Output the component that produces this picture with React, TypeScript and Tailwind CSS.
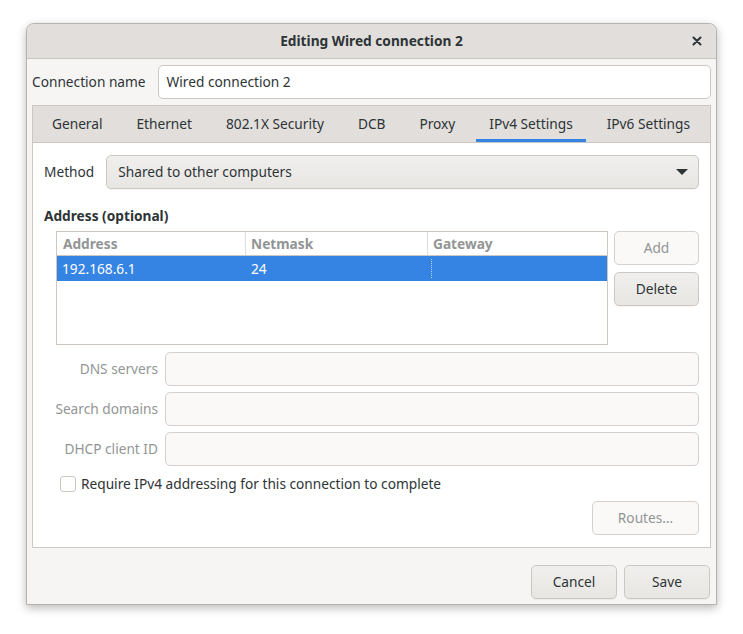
import React from "react";

const tabs = ["General", "Ethernet", "802.1X Security", "DCB", "Proxy", "IPv4 Settings", "IPv6 Settings"];

const btnBase =
  "flex items-center h-[34px] rounded-[5px] border border-[#cdc7c2] bg-gradient-to-b from-[#f0efed] to-[#e8e6e3] shadow-[0_1px_0_rgba(0,0,0,0.04)] text-[#2e3436]";
const btn = btnBase + " justify-center";
const btnDisabled =
  "flex items-center justify-center h-[34px] rounded-[5px] border border-[#d5d0cc] bg-[#faf9f8] text-[#929595]";

const DisabledRow = ({ label }: { label: string }) => (
  <div className="flex items-center gap-[7px]">
    <div className="w-[103px] text-right text-[#929595] whitespace-nowrap">{label}</div>
    <div className="flex-1 h-[34px] rounded-[5px] border border-[#d5d0cc] bg-[#faf9f8]" />
  </div>
);

export default function App() {
  return (
    <div
      className="w-[743px] h-[634px] bg-white pt-[23px] pl-[26px] text-[13.7px] leading-[22px] text-[#2e3436]"
      style={{ fontFamily: '"Noto Sans", "Open Sans", sans-serif' }}
    >
      <div className="w-[691px] h-[582px] flex flex-col bg-[#f6f5f4] rounded-t-[8px] border border-[#b6b2ad] shadow-[0_3px_10px_rgba(0,0,0,0.28)]">
        {/* title bar */}
        <div className="relative h-[35px] shrink-0 flex items-center justify-center bg-[#e1dedb] border-b border-[#c8c4bf] rounded-t-[8px]">
          <span className="font-bold">Editing Wired connection 2</span>
          <svg className="absolute right-[14px] top-[12px]" width="10" height="10" viewBox="0 0 10 10">
            <path d="M1.5 1.5 L8.5 8.5 M8.5 1.5 L1.5 8.5" stroke="#2e3436" strokeWidth="2" strokeLinecap="round" />
          </svg>
        </div>

        <div className="flex-1 flex flex-col px-[5px] pt-[6px]">
          {/* connection name */}
          <div className="flex items-center gap-[12px]">
            <span className="whitespace-nowrap">Connection name</span>
            <div className="flex-1 h-[34px] flex items-center px-[8px] rounded-[5px] border border-[#cdc7c2] bg-white">
              Wired connection 2
            </div>
          </div>

          {/* notebook */}
          <div className="mt-[6px] h-[443px] flex flex-col border border-[#cdc7c2] bg-white">
            <div className="h-[37px] shrink-0 flex items-stretch gap-[8px] pl-[6px] bg-[#e1dedb] border-b border-[#cdc7c2]">
              {tabs.map((t) => (
                <div
                  key={t}
                  className={
                    "flex items-center px-[13px] pt-[2px] whitespace-nowrap border-b-[3px] " +
                    (t === "IPv4 Settings" ? "border-[#3584e4]" : "border-transparent")
                  }
                >
                  {t}
                </div>
              ))}
            </div>

            <div className="flex-1 flex flex-col px-[11px] pt-[12px] pb-[12px]">
              {/* method */}
              <div className="flex items-center gap-[12px]">
                <span>Method</span>
                <div className={btnBase + " flex-1 justify-between pl-[11px] pr-[10px]"}>
                  <span>Shared to other computers</span>
                  <svg width="12" height="6" viewBox="0 0 12 6">
                    <path d="M0 0 L12 0 L6 6 Z" fill="#2e3436" />
                  </svg>
                </div>
              </div>

              <div className="mt-[16px] font-bold">Address (optional)</div>

              {/* address table + buttons */}
              <div className="mt-[4px] ml-[12px] flex gap-[6px]">
                <div className="w-[552px] h-[114px] border border-[#cdc7c2] bg-white">
                  <div className="flex h-[24px] border-b border-[#cdc7c2] font-bold text-[#929595]">
                    <div className="w-[189px] px-[6px] flex items-center border-r border-[#e0dcd8]">Address</div>
                    <div className="w-[182px] px-[5px] flex items-center border-r border-[#e0dcd8]">Netmask</div>
                    <div className="flex-1 px-[5px] flex items-center">Gateway</div>
                  </div>
                  <div className="flex h-[25px] bg-[#3584e4] text-white">
                    <div className="w-[189px] px-[5px] flex items-center">192.168.6.1</div>
                    <div className="w-[182px] px-[5px] flex items-center">24</div>
                    <div className="flex-1 flex items-center">
                      <div className="ml-[3px] h-[19px] border-l border-dotted border-[#b7d3f5]" />
                    </div>
                  </div>
                </div>
                <div className="w-[85px] flex flex-col gap-[7px]">
                  <div className={btnDisabled}>Add</div>
                  <div className={btn}>Delete</div>
                </div>
              </div>

              {/* disabled fields */}
              <div className="mt-[7px] ml-[11px] flex flex-col gap-[6px]">
                <DisabledRow label="DNS servers" />
                <DisabledRow label="Search domains" />
                <DisabledRow label="DHCP client ID" />
              </div>

              <div className="mt-[7px] ml-[16px] flex items-center gap-[5px]">
                <div className="w-[16px] h-[16px] rounded-[3px] border border-[#cdc7c2] bg-white" />
                <span>Require IPv4 addressing for this connection to complete</span>
              </div>

              <div className="mt-[6px] flex justify-end">
                <div className={btnDisabled + " w-[107px]"}>Routes…</div>
              </div>
            </div>
          </div>

          {/* action buttons */}
          <div className="mt-[17px] flex justify-end gap-[7px] pr-[1px]">
            <div className={btn + " w-[86px]"}>Cancel</div>
            <div className={btn + " w-[86px]"}>Save</div>
          </div>
        </div>
      </div>
    </div>
  );
}
